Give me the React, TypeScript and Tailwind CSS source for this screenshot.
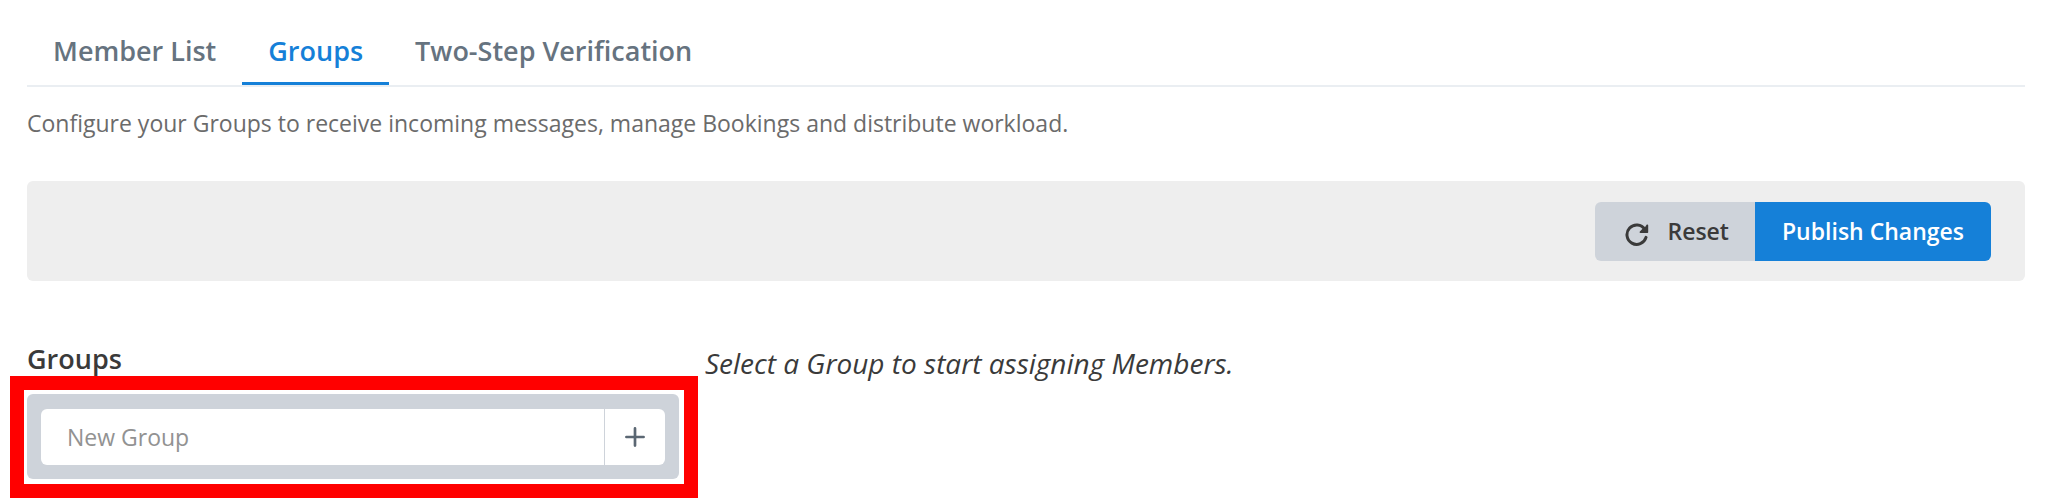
import { useState } from "react";
import type { FormEvent } from "react";

const tabs = ["Member List", "Groups", "Two-Step Verification"];

function ResetIcon() {
  return (
    <svg viewBox="0 0 24 24" className="mt-1 size-6 shrink-0" fill="none" aria-hidden="true">
      <path d="M19.8 7.4A9.7 9.7 0 1 0 21 15.4" stroke="currentColor" strokeWidth="3" strokeLinecap="round" />
      <path d="M23.2 3.2v7a.7.7 0 0 1-.7.7h-7c-.9 0-1.2-.9-.6-1.5l2.4-2.4 2.3-1.3 2-2.9c.6-.7 1.6-.4 1.6.4z" fill="currentColor" />
    </svg>
  );
}

function PlusIcon() {
  return (
    <svg viewBox="0 0 20 20" className="size-5" fill="none" aria-hidden="true">
      <path d="M10 1.4v17.2M1.4 10h17.2" stroke="currentColor" strokeWidth="2.7" strokeLinecap="round" />
    </svg>
  );
}

export default function App() {
  const [active, setActive] = useState("Groups");
  const [name, setName] = useState("");

  const addGroup = (event: FormEvent) => {
    event.preventDefault();
    setName("");
  };

  return (
    <main className="bg-white pt-5 pr-[43px] pb-[19px] pl-[27px] font-['Open_Sans','Liberation_Sans',sans-serif] text-[#3a3a3a]">
      <nav className="flex border-b-2 border-[#eaeef2]">
        {tabs.map((tab) => (
          <button
            key={tab}
            type="button"
            onClick={() => setActive(tab)}
            className={
              tab === active
                ? "border-b-3 border-[#1580d8] px-[26px] py-[13px] text-[27px] leading-9 font-semibold text-[#1580d8]"
                : "border-b-3 border-transparent px-[26px] py-[13px] text-[27px] leading-9 font-semibold text-[#66737f]"
            }
          >
            {tab}
          </button>
        ))}
      </nav>

      <p className="mt-[18px] text-[23px] leading-9 text-[#6b6b6b]">
        Configure your Groups to receive incoming messages, manage Bookings and distribute workload.
      </p>

      <div className="mt-10 flex justify-end rounded-md bg-[#eeeeee] pt-[21px] pr-[34px] pb-5 pl-6">
        <button
          type="button"
          className="flex h-[59px] items-center gap-[18px] rounded-l-md bg-[#ced3da] pr-[26px] pl-[30px] text-[23px] font-semibold"
        >
          <ResetIcon />
          Reset
        </button>
        <button
          type="button"
          className="h-[59px] rounded-r-md bg-[#1580d8] px-[27px] text-[23px] font-semibold text-white"
        >
          Publish Changes
        </button>
      </div>

      <div className="mt-[60px] grid grid-cols-[minmax(0,652px)_1fr] gap-[26px]">
        <section>
          <h2 className="text-[27px] leading-9 font-semibold">
            <label htmlFor="new-group">Groups</label>
          </h2>
          <div className="relative mt-[17px] rounded-md bg-[#ced3da] px-3.5 pt-[15px] pb-3.5">
            <div className="pointer-events-none absolute -top-[18px] -right-[19px] -bottom-[19px] -left-[17px] border-14 border-[#ff0000]" />
            <form onSubmit={addGroup} className="flex h-14 overflow-hidden rounded-md bg-white">
              <input
                id="new-group"
                value={name}
                onChange={(event) => setName(event.target.value)}
                placeholder="New Group"
                className="min-w-0 flex-1 px-[26px] text-[23px] outline-none placeholder:text-[#929292]"
              />
              <button
                type="submit"
                aria-label="Add group"
                className="flex w-[61px] items-center justify-center border-l border-[#ced3da] text-[#5b6773]"
              >
                <PlusIcon />
              </button>
            </form>
          </div>
        </section>
        <p className="mt-1 text-[28px] leading-9 italic">Select a Group to start assigning Members.</p>
      </div>
    </main>
  );
}
